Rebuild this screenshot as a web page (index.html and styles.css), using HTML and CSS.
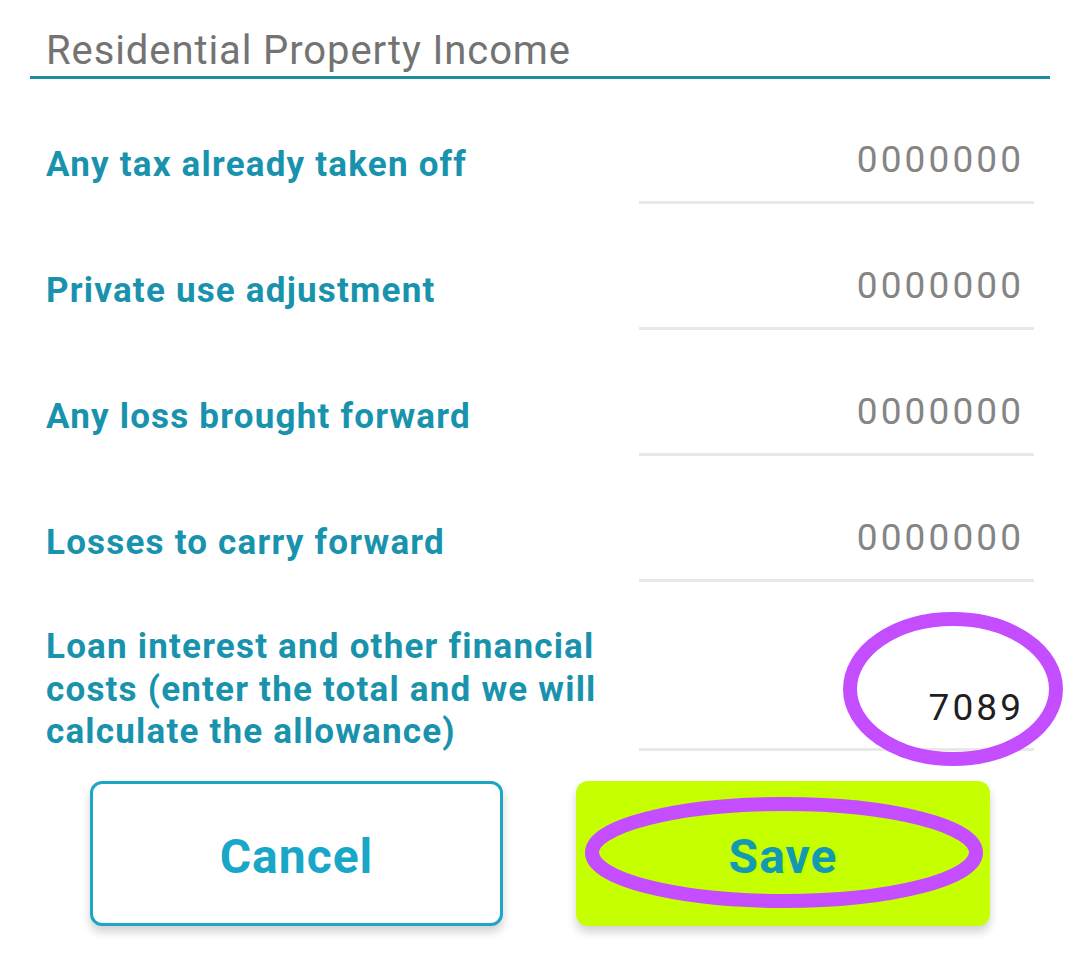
FILE: index.html
```html
<!DOCTYPE html>
<html>
<head>
<meta charset="utf-8">
<link rel="stylesheet" href="styles.css">
</head>
<body>
<div class="page">
  <div class="header">Residential Property Income</div>

  <div class="row row-first">
    <div class="label">Any tax already taken off</div>
    <div class="field"><span class="value placeholder">0000000</span></div>
  </div>
  <div class="row">
    <div class="label">Private use adjustment</div>
    <div class="field"><span class="value placeholder">0000000</span></div>
  </div>
  <div class="row">
    <div class="label">Any loss brought forward</div>
    <div class="field"><span class="value placeholder">0000000</span></div>
  </div>
  <div class="row">
    <div class="label">Losses to carry forward</div>
    <div class="field"><span class="value placeholder">0000000</span></div>
  </div>
  <div class="row row-multi">
    <div class="label label-multi">Loan interest and other financial costs (enter the total and we will calculate the allowance)</div>
    <div class="field field-multi">
      <span class="value filled">7089</span>
      <svg class="mark mark-value" width="220" height="154" viewBox="0 0 220 154"><ellipse cx="110" cy="77" rx="103" ry="70" fill="none" stroke="#c44dff" stroke-width="14"/></svg>
    </div>
  </div>

  <div class="buttons">
    <button class="btn btn-cancel">Cancel</button>
    <button class="btn btn-save">Save
      <svg class="mark mark-save" width="398" height="111" viewBox="0 0 398 111"><ellipse cx="199" cy="55.5" rx="192" ry="48.5" fill="none" stroke="#c44dff" stroke-width="14"/></svg>
    </button>
  </div>
</div>
</body>
</html>
```
FILE: styles.css
```css
html, body {
  margin: 0;
  padding: 0;
  background: #ffffff;
}
body {
  font-family: Roboto, "Noto Sans", "Liberation Sans", sans-serif;
  width: 1080px;
  height: 963px;
  overflow: hidden;
}
.page {
  display: flex;
  flex-direction: column;
}
.header {
  margin: 0 30px;
  padding: 28px 0 2px 16px;
  font-size: 40px;
  letter-spacing: 0.9px;
  line-height: 46px;
  color: #737373;
  border-bottom: 3px solid #1f8ba1;
}
.row {
  display: flex;
  align-items: center;
  margin-top: 46px;
  padding-left: 46px;
}
.row-first {
  margin-top: 45px;
}
.label {
  flex: 1;
  font-size: 35px;
  font-weight: 700;
  color: #1993ad;
  letter-spacing: 1.2px;
  line-height: 42.5px;
  padding-top: 3px;
}
.field {
  position: relative;
  width: 395px;
  height: 80px;
  margin-right: 46px;
  box-sizing: border-box;
  border-bottom: 3px solid #e8e8e8;
  display: flex;
  justify-content: flex-end;
  align-items: flex-start;
  padding: 12px 13px 0 0;
}
.value {
  font-size: 37px;
  line-height: 48px;
  letter-spacing: 3.1px;
  margin-right: -3.1px;
}
.placeholder {
  color: #858585;
}
.filled {
  color: #1f1f1f;
}
.row-multi {
  align-items: flex-end;
  margin-top: 44px;
}
.label-multi {
  padding-top: 0;
  margin-bottom: -3px;
  flex: none;
  width: 580px;
  margin-right: auto;
}
.field-multi {
  align-items: flex-end;
  padding: 0 13px 16px 0;
  height: 83px;
}
.mark {
  position: absolute;
  pointer-events: none;
  overflow: visible;
}
.mark-value {
  left: 204px;
  top: -56px;
}
.buttons {
  display: flex;
  gap: 73px;
  margin-top: 30px;
  padding-left: 90px;
}
.btn {
  position: relative;
  width: 414px;
  height: 145px;
  box-sizing: border-box;
  border-radius: 12px;
  font-family: Roboto, "Noto Sans", "Liberation Sans", sans-serif;
  font-size: 48px;
  font-weight: 700;
  letter-spacing: 1px;
  display: flex;
  align-items: center;
  justify-content: center;
  padding: 6px 0 0 0;
  box-shadow: 0 6px 10px rgba(0, 0, 0, 0.18);
}
.btn-cancel {
  width: 413px;
  background: #ffffff;
  border: 3px solid #1ea6c6;
  color: #19a7c8;
}
.btn-save {
  background: #c6ff00;
  border: none;
  color: #139ab0;
}
.mark-save {
  left: 9px;
  top: 16px;
}
```
